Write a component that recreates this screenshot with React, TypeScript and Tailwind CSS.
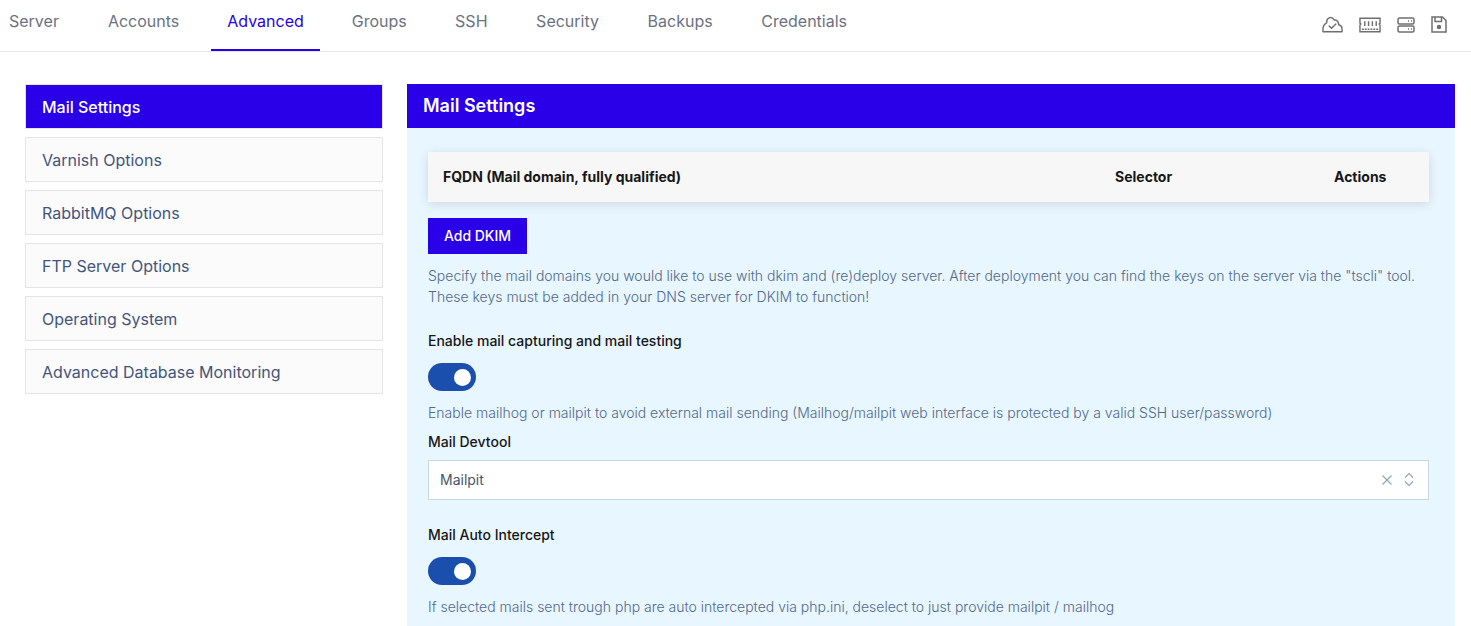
import React from "react";

const tabs = ["Server", "Accounts", "Advanced", "Groups", "SSH", "Security", "Backups", "Credentials"];
const tabClass: Record<string, string> = {
  Server: "pl-[9px] pr-[24.500px]",
  Accounts: "pl-[24.500px] pr-[24px]",
  Advanced: "px-[16px] mx-[8px]",
  Groups: "px-[24px]",
  SSH: "px-[24.300px]",
  Security: "px-[24.300px]",
  Backups: "px-[24.300px]",
  Credentials: "px-[24.300px]",
};
const side = ["Varnish Options", "RabbitMQ Options", "FTP Server Options", "Operating System", "Advanced Database Monitoring"];

function Toggle() {
  return (
    <div className="w-[48px] h-[28px] rounded-full bg-[#1a4fad] flex items-center justify-end pr-[5px]">
      <div className="w-[17px] h-[17px] rounded-full bg-white" />
    </div>
  );
}

function Help({ children }: { children: React.ReactNode }) {
  return <p className="text-[14px] leading-[21px] font-light text-[#526a8a]">{children}</p>;
}

export default function App() {
  return (
    <div className="w-[1471px] h-[626px] overflow-hidden bg-white font-['Inter',sans-serif]">
      <div className="h-[52px] border-b border-[#e5e5e5] flex items-start justify-between">
        <div className="flex h-[51px]">
          {tabs.map((t) => (
            <div
              key={t}
              className={`h-[51px] flex items-center pb-[8px] text-[16px] border-b-2 ${tabClass[t]} ${t === "Advanced" ? "text-[#2a00e8] border-[#2a00e8]" : "text-[#6b7280] border-transparent"}`}
            >
              {t}
            </div>
          ))}
        </div>
        <div className="flex items-center gap-[16px] h-[49px] pr-[24px] text-[#6f6f6f]">
          <svg width="21" height="17" viewBox="0 0 22 17" fill="none" stroke="currentColor" strokeWidth="1.5" strokeLinejoin="round" strokeLinecap="round">
            <path d="M1 16h20v-2.500c0-2.300-1.300-4.300-3.400-4.800C17.200 4.500 14.800 3.500 13 3.800 11.800 2 9.500.600 7.500 1.500 5.500 2.300 4.800 4.500 5 6.500 2.500 8 1 11 1 13.500z" />
            <path d="M7.500 10l2.500 2.500 4.500-4.500" />
          </svg>
          <svg width="22" height="16" viewBox="0 0 23 16" fill="none" stroke="currentColor" strokeWidth="1.5">
            <path d="M1 1h21v5l-.9.9.9.9V15H1V7.800l.9-.9L1 6z" />
            <path d="M6 4v5M10 4v5M14 4v5M18 4v5" />
            <path d="M3 12.500h17" strokeDasharray="2 1" />
          </svg>
          <svg width="18" height="16" viewBox="0 0 18 16" fill="none" stroke="currentColor" strokeWidth="1.5">
            <rect x="1" y="1" width="16" height="6" rx="1.500" />
            <rect x="1" y="9" width="16" height="6" rx="1.500" />
            <path d="M11 4h1M14 4h1M11 12h1M14 12h1" />
          </svg>
          <svg width="16" height="17" viewBox="0 0 16 17" fill="none" stroke="currentColor" strokeWidth="1.500">
            <path d="M1 1h10.500L15 4.500V16H1z" />
            <path d="M4 1v4.500h6.500V1" />
            <circle cx="8" cy="11" r="1.500" fill="currentColor" />
          </svg>
        </div>
      </div>

      <div className="flex items-start pl-[25px] pr-[16px] pt-[32px] gap-[24px]">
        <div className="w-[358px] flex flex-col gap-[8px]">
          <div className="h-[45px] border border-[#e5e5e5] bg-[#2a00e8] text-white font-medium text-[16px] flex items-center pl-[16px]">
            Mail Settings
          </div>
          {side.map((s) => (
            <div key={s} className="h-[45px] border border-[#e5e5e5] bg-[#fbfbfb] text-[#44557a] font-normal text-[16px] flex items-center pl-[16px]">
              {s}
            </div>
          ))}
        </div>

        <div className="w-[1048px]">
          <div className="h-[44px] bg-[#2a00e8] text-white font-semibold text-[18px] leading-[43px] pl-[16px]">
            Mail Settings
          </div>
          <div className="bg-[#e8f6ff] h-[498px] pl-[21px] pr-[26px] pt-[24px]">
            <div className="h-[50px] bg-[#f7f7f7] shadow-[0_2px_10px_rgba(0,0,0,0.12)] flex items-center text-[14px] font-bold text-[#171717] pb-[1px]">
              <div className="pl-[15px] w-[687px]">FQDN (Mail domain, fully qualified)</div>
              <div className="w-[219px]">Selector</div>
              <div>Actions</div>
            </div>
            <div className="mt-[16px] w-[99px] h-[36px] bg-[#2a00e8] text-white text-[14px] font-medium flex items-center justify-center pb-[1px]">
              Add DKIM
            </div>
            <div className="mt-[11px]">
              <Help>
                Specify the mail domains you would like to use with dkim and (re)deploy server. After deployment you can find the keys on the server via the "tscli" tool.
                <br />
                These keys must be added in your DNS server for DKIM to function!
              </Help>
            </div>
            <div className="mt-[23px] text-[14px] leading-[21px] font-medium text-[#171717]">Enable mail capturing and mail testing</div>
            <div className="mt-[12px]"><Toggle /></div>
            <div className="mt-[11px]">
              <Help>Enable mailhog or mailpit to avoid external mail sending (Mailhog/mailpit web interface is protected by a valid SSH user/password)</Help>
            </div>
            <div className="mt-[8px] text-[14px] leading-[21px] font-medium text-[#171717]">Mail Devtool</div>
            <div className="mt-[8px] h-[40px] bg-white border border-[#cbd5e1] flex items-center pl-[11px] pr-[14px] pb-[1px] text-[14px] text-[#475569]">
              <span className="flex-1">Mailpit</span>
              <svg width="12" height="12" viewBox="0 0 12 12" fill="none" stroke="#94a3b8" strokeWidth="1.2" className="mr-[11px]">
                <path d="M1.500 1.500l9 9M10.500 1.500l-9 9" />
              </svg>
              <svg width="10" height="15" viewBox="0 0 10 15" fill="none" stroke="#94a3b8" strokeWidth="1.2">
                <path d="M1 5.500L5 1.500l4 4M1 9.500l4 4 4-4" />
              </svg>
            </div>
            <div className="mt-[24px] text-[14px] leading-[21px] font-medium text-[#171717]">Mail Auto Intercept</div>
            <div className="mt-[12px]"><Toggle /></div>
            <div className="mt-[11px]">
              <Help>If selected mails sent trough php are auto intercepted via php.ini, deselect to just provide mailpit / mailhog</Help>
            </div>
          </div>
        </div>
      </div>
    </div>
  );
}
